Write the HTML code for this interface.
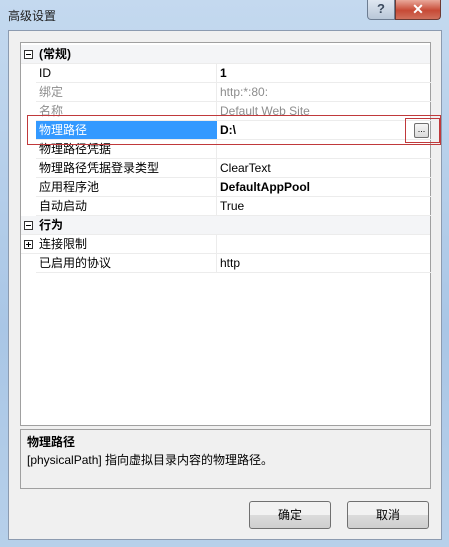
<!DOCTYPE html>
<html><head><meta charset="utf-8"><style>
*{margin:0;padding:0;box-sizing:border-box}
body{width:449px;height:547px;overflow:hidden;background:linear-gradient(#c4d9ef,#a9c6e6 60%,#b7d0ea);font-family:"Liberation Sans","Noto Sans CJK SC",sans-serif;font-size:12px;color:#000;position:relative}
.abs{position:absolute}
.title{left:8px;top:7px;font-size:12px;color:#1e1e1e}
.help{left:367px;top:0;width:28px;height:20px;border:1px solid #6d7d92;border-top:none;border-radius:0 0 0 4px;background:linear-gradient(#dfe7f1,#b9c7d8);text-align:center;color:#3b4a5e;font-weight:bold;font-size:13px;line-height:18px}
.close{left:395px;top:0;width:46px;height:20px;border:1px solid #6d3a33;border-top:none;border-radius:0 0 4px 0;background:linear-gradient(#e9a99b,#c74a36 55%,#d0705c);text-align:center;color:#fff;font-weight:bold;font-size:14px;line-height:18px}
.client{left:8px;top:30px;width:434px;height:510px;background:#f0f0f0;border:1px solid #8c9bb0}
.grid{left:20px;top:42px;width:411px;height:384px;background:#fff;border:1px solid #a0a0a0}
.row{position:absolute;left:15px;width:395px;height:19px;border-bottom:1px solid #ececec;line-height:19px}
.row .n{position:absolute;left:3px;top:0}
.row .v{position:absolute;left:184px;top:0}
.row .sep{position:absolute;left:180px;top:0;width:1px;height:18px;background:#ececec}
.cat{left:0;width:409px;background:#f4f5f7;font-weight:bold}
.cat .n{left:18px}
.pm{position:absolute;left:3px;top:5px;width:9px;height:9px;border:1px solid #333;background:#fff}
.pm:before{content:"";position:absolute;left:1px;top:3px;width:5px;height:1px;background:#000}
.pm.plus:after{content:"";position:absolute;left:3px;top:1px;width:1px;height:5px;background:#000}
.gray{color:#8d8d8d}
.desc{left:20px;top:429px;width:411px;height:60px;border:1px solid #a0a0a0;background:#f0f0f0;padding:3px 6px;line-height:18px}
.btn{top:501px;width:82px;height:28px;border:1px solid #707070;border-radius:3px;background:linear-gradient(#f2f2f2 50%,#dcdcdc 50%,#cfcfcf);text-align:center;line-height:26px}
</style></head><body>
<div class="abs title">高级设置</div>
<div class="abs help">?</div>
<div class="abs close">✕</div>
<div class="abs client"></div>
<div class="abs grid">
 <div class="row cat" style="top:2px"><span class="pm"></span><span class="n">(常规)</span></div>
 <div class="row" style="top:21px"><span class="n">ID</span><span class="sep"></span><span class="v" style="font-weight:bold">1</span></div>
 <div class="row gray" style="top:40px"><span class="n">绑定</span><span class="sep"></span><span class="v">http:*:80:</span></div>
 <div class="row gray" style="top:59px"><span class="n">名称</span><span class="sep"></span><span class="v">Default Web Site</span></div>
 <div class="row" style="top:78px"><span class="n" style="left:0;width:181px;height:18px;background:#3399ff;color:#fff;padding-left:3px">物理路径</span><span class="v" style="font-weight:bold">D:\</span>
  <span style="position:absolute;left:378px;top:2px;width:15px;height:15px;border:1px solid #707070;border-radius:2px;background:linear-gradient(#f6f6f6,#dadada);font-size:9px;line-height:10px;text-align:center">...</span></div>
 <div class="row" style="top:97px"><span class="n">物理路径凭据</span><span class="sep"></span></div>
 <div class="row" style="top:116px"><span class="n">物理路径凭据登录类型</span><span class="sep"></span><span class="v">ClearText</span></div>
 <div class="row" style="top:135px"><span class="n">应用程序池</span><span class="sep"></span><span class="v" style="font-weight:bold">DefaultAppPool</span></div>
 <div class="row" style="top:154px"><span class="n">自动启动</span><span class="sep"></span><span class="v">True</span></div>
 <div class="row cat" style="top:173px"><span class="pm"></span><span class="n">行为</span></div>
 <div class="row" style="top:192px;left:0;width:409px"><span class="pm plus"></span><span class="n" style="left:18px">连接限制</span><span class="sep" style="left:195px"></span></div>
 <div class="row" style="top:211px"><span class="n">已启用的协议</span><span class="sep"></span><span class="v">http</span></div>
</div>
<div class="abs" style="left:27px;top:115px;width:414px;height:30px;border:1px solid #c0393b"></div>
<div class="abs" style="left:405px;top:118px;width:35px;height:25px;border:1px solid #c0393b"></div>
<div class="abs desc"><b>物理路径</b><br>[physicalPath] 指向虚拟目录内容的物理路径。</div>
<div class="abs btn" style="left:249px">确定</div>
<div class="abs btn" style="left:347px">取消</div>
</body></html>
